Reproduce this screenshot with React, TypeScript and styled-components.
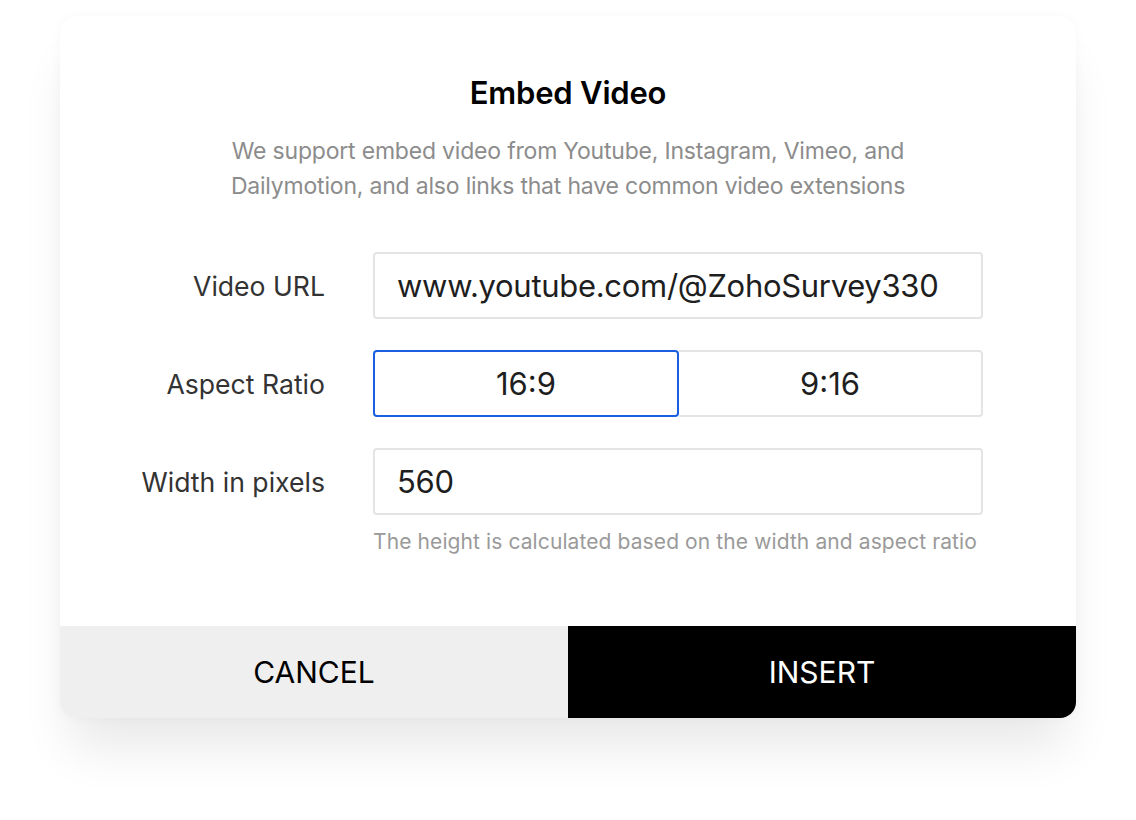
import React from "react";
import styled, { createGlobalStyle } from "styled-components";

const Global = createGlobalStyle`
  html, body { margin: 0; padding: 0; background: #ffffff; }
  body { font-family: Inter, "Noto Sans", sans-serif; }
`;

const Page = styled.div`
  width: 1136px;
  height: 820px;
  padding: 16px 60px 0 60px;
  box-sizing: border-box;
`;

const Card = styled.div`
  width: 1016px;
  background: #fff;
  border-radius: 16px;
  box-shadow: 0 40px 50px -10px rgba(0, 0, 0, 0.09), 0 0 12px rgba(0, 0, 0, 0.03);
  display: flex;
  flex-direction: column;
  overflow: hidden;
`;

const Body = styled.div`
  padding: 57px 0 0 0;
  display: flex;
  flex-direction: column;
  align-items: center;
`;

const Title = styled.h1`
  margin: 0;
  font-size: 31px;
  font-weight: 600;
  color: #000;
  line-height: 40px;
  letter-spacing: -0.2px;
`;

const Desc = styled.p`
  margin: 21px 0 0 0;
  font-size: 23px;
  line-height: 35px;
  color: #8c8c8c;
  text-align: center;
  width: 700px;
  letter-spacing: -0.2px;
`;

const Form = styled.div`
  display: grid;
  grid-template-columns: 265px 610px;
  column-gap: 48px;
  row-gap: 31px;
  margin: 48px 93px 0 0;
  align-self: flex-start;
  align-items: center;
`;

const Label = styled.label`
  text-align: right;
  font-size: 26.6px;
  color: #333;
`;

const Field = styled.div`
  height: 67px;
  box-sizing: border-box;
  border: 2px solid #e4e4e4;
  border-radius: 4px;
  padding: 0 22px;
  display: flex;
  align-items: center;
  font-size: 31px;
  color: #1e1e1e;
  letter-spacing: -0.3px;
`;

const Segments = styled.div`
  display: flex;
  height: 67px;
`;

const Segment = styled.div<{ $active?: boolean }>`
  flex: 1;
  box-sizing: border-box;
  display: flex;
  align-items: center;
  justify-content: center;
  font-size: 31px;
  color: #1e1e1e;
  border: 2px solid ${(p) => (p.$active ? "#1a5fe0" : "#e4e4e4")};
  border-radius: 4px;
  ${(p) => (p.$active ? "" : "border-left: none; border-top-left-radius: 0; border-bottom-left-radius: 0;")}
`;

const Hint = styled.div`
  grid-column: 2;
  margin-top: -17px;
  font-size: 21px;
  color: #9a9a9a;
  letter-spacing: 0.1px;
`;

const Footer = styled.div`
  margin-top: 72px;
  display: flex;
  height: 92px;
`;

const Button = styled.button<{ $primary?: boolean }>`
  flex: 1;
  border: none;
  font-family: inherit;
  font-size: 30px;
  background: ${(p) => (p.$primary ? "#000" : "#efefef")};
  color: ${(p) => (p.$primary ? "#fff" : "#000")};
  letter-spacing: 0;
`;

export default function App() {
  return (
    <Page>
      <Global />
      <Card>
        <Body>
          <Title>Embed Video</Title>
          <Desc>
            We support embed video from Youtube, Instagram, Vimeo, and Dailymotion, and also links that have common video extensions
          </Desc>
          <Form>
            <Label>Video URL</Label>
            <Field>www.youtube.com/@ZohoSurvey330</Field>
            <Label>Aspect Ratio</Label>
            <Segments>
              <Segment $active>16:9</Segment>
              <Segment>9:16</Segment>
            </Segments>
            <Label>Width in pixels</Label>
            <Field>560</Field>
            <Hint>The height is calculated based on the width and aspect ratio</Hint>
          </Form>
        </Body>
        <Footer>
          <Button>CANCEL</Button>
          <Button $primary>INSERT</Button>
        </Footer>
      </Card>
    </Page>
  );
}
